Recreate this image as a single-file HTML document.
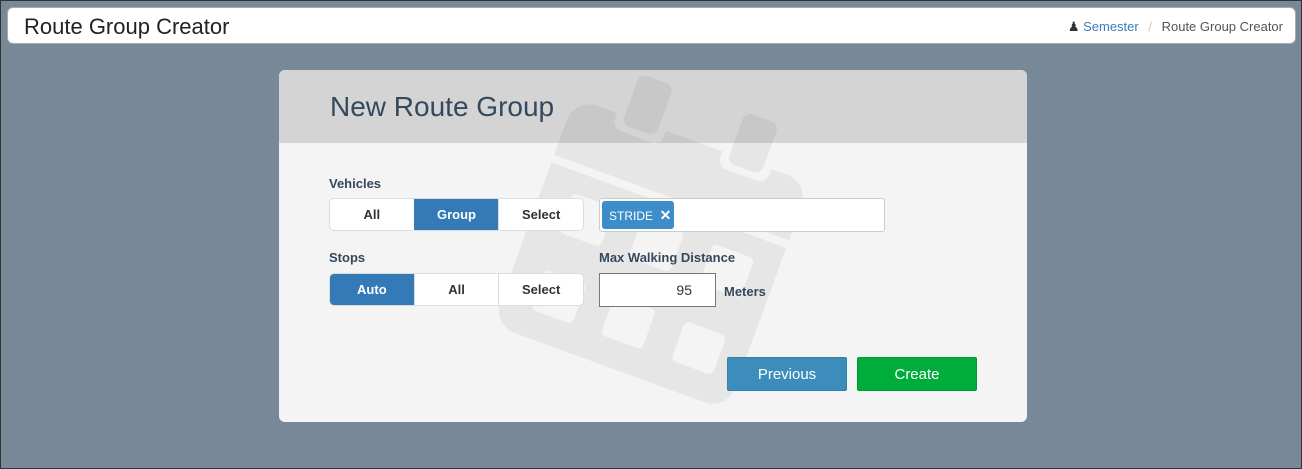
<!DOCTYPE html>
<html><head><style>
*{box-sizing:border-box;margin:0;padding:0}
body{width:1302px;height:469px;background:#778899;font-family:"Liberation Sans",sans-serif;position:relative;overflow:hidden;box-shadow:inset 0 0 0 1px #333}
.top{position:absolute;left:7px;top:7px;width:1289px;height:37px;background:#fff;border-radius:6px;border:1px solid #aaa}
.top h1{position:absolute;left:16px;top:6px;font-size:22px;font-weight:normal;color:#222}
.bc{position:absolute;right:12px;top:11px;font-size:13px;color:#555}
.bc a{color:#3a7cb8;text-decoration:none}
.card{position:absolute;left:279px;top:70px;width:748px;height:352px;background:#f4f4f4;border-radius:6px;overflow:hidden}
.hd{position:absolute;left:0;top:0;width:748px;height:73px;background:#d4d4d4}
.hd h2{position:absolute;left:51px;top:21px;font-size:28px;font-weight:normal;color:#34495e}
svg.wm{position:absolute;left:0;top:0}
.lbl{position:absolute;font-size:13px;font-weight:bold;color:#34495e}
.grp{position:absolute;width:255px;height:33px;display:flex;border:1px solid #ddd;border-radius:5px;overflow:hidden;background:#fff}
.grp div{flex:1;text-align:center;line-height:31px;font-size:13px;font-weight:bold;color:#333;border-left:1px solid #ddd}
.grp div:first-child{border-left:none}
.grp .on{background:#337ab7;color:#fff;border-color:#337ab7}
.tag{position:absolute;left:320px;top:128px;width:286px;height:34px;background:#fff;border:1px solid #ccc;border-radius:3px}
.tag span{position:absolute;left:2px;top:2px;height:28px;width:72px;background:#3c8dca;color:#fff;border-radius:3px;font-size:12px;line-height:28px;padding-left:7px}
.inp{position:absolute;left:320px;top:203px;width:117px;height:34px;background:#fff;border:1px solid #777;text-align:right;padding-right:23px;line-height:32px;font-size:14px;color:#333}
.btn{position:absolute;top:287px;width:120px;height:34px;color:#fff;text-align:center;line-height:34px;font-size:15px;border-radius:2px}
</style></head><body>
<div class="top"><h1>Route Group Creator</h1>
<div class="bc"><span style="color:#333">&#9823;</span> <a>Semester</a> <span style="color:#ccc;margin:0 6px">/</span> Route Group Creator</div></div>
<div class="card">
<div class="hd"></div>
<svg class="wm" width="748" height="352"><defs><mask id="m"><rect x="-300" y="-300" width="600" height="600" fill="#fff"/>
<g fill="#000">
<rect x="-94" y="-31" width="44" height="42" rx="5"/><rect x="-20" y="-31" width="44" height="42" rx="5"/><rect x="55" y="-31" width="44" height="42" rx="5"/>
<rect x="-94" y="51" width="44" height="42" rx="5"/><rect x="-20" y="51" width="44" height="42" rx="5"/><rect x="55" y="51" width="44" height="42" rx="5"/>
<rect x="-300" y="-60" width="600" height="8"/>
<rect x="-80" y="-175" width="52" height="70" rx="10"/><rect x="32" y="-175" width="52" height="70" rx="10"/></g></mask></defs>
<g transform="translate(372,184) rotate(20)" fill="rgba(0,0,0,0.055)"><g mask="url(#m)"><rect x="-125" y="-121" width="250" height="242" rx="24"/></g>
<rect x="-72" y="-166" width="36" height="54" rx="8"/><rect x="40" y="-166" width="36" height="54" rx="8"/></g></svg>
<div class="hd" style="background:transparent"><h2>New Route Group</h2></div>
<div class="lbl" style="left:50px;top:106px">Vehicles</div>
<div class="grp" style="left:50px;top:128px"><div>All</div><div class="on">Group</div><div>Select</div></div>
<div class="tag"><span>STRIDE &nbsp;<b style="font-size:14px">✕</b></span></div>
<div class="lbl" style="left:50px;top:180px">Stops</div>
<div class="grp" style="left:50px;top:203px"><div class="on">Auto</div><div>All</div><div>Select</div></div>
<div class="lbl" style="left:320px;top:180px">Max Walking Distance</div>
<div class="inp">95</div>
<div class="lbl" style="left:445px;top:214px">Meters</div>
<div class="btn" style="left:448px;background:#3c8dbc;border:1px solid #367fa9">Previous</div>
<div class="btn" style="left:578px;background:#00ac3a;border:1px solid #009933">Create</div>
</div>
</body></html>
